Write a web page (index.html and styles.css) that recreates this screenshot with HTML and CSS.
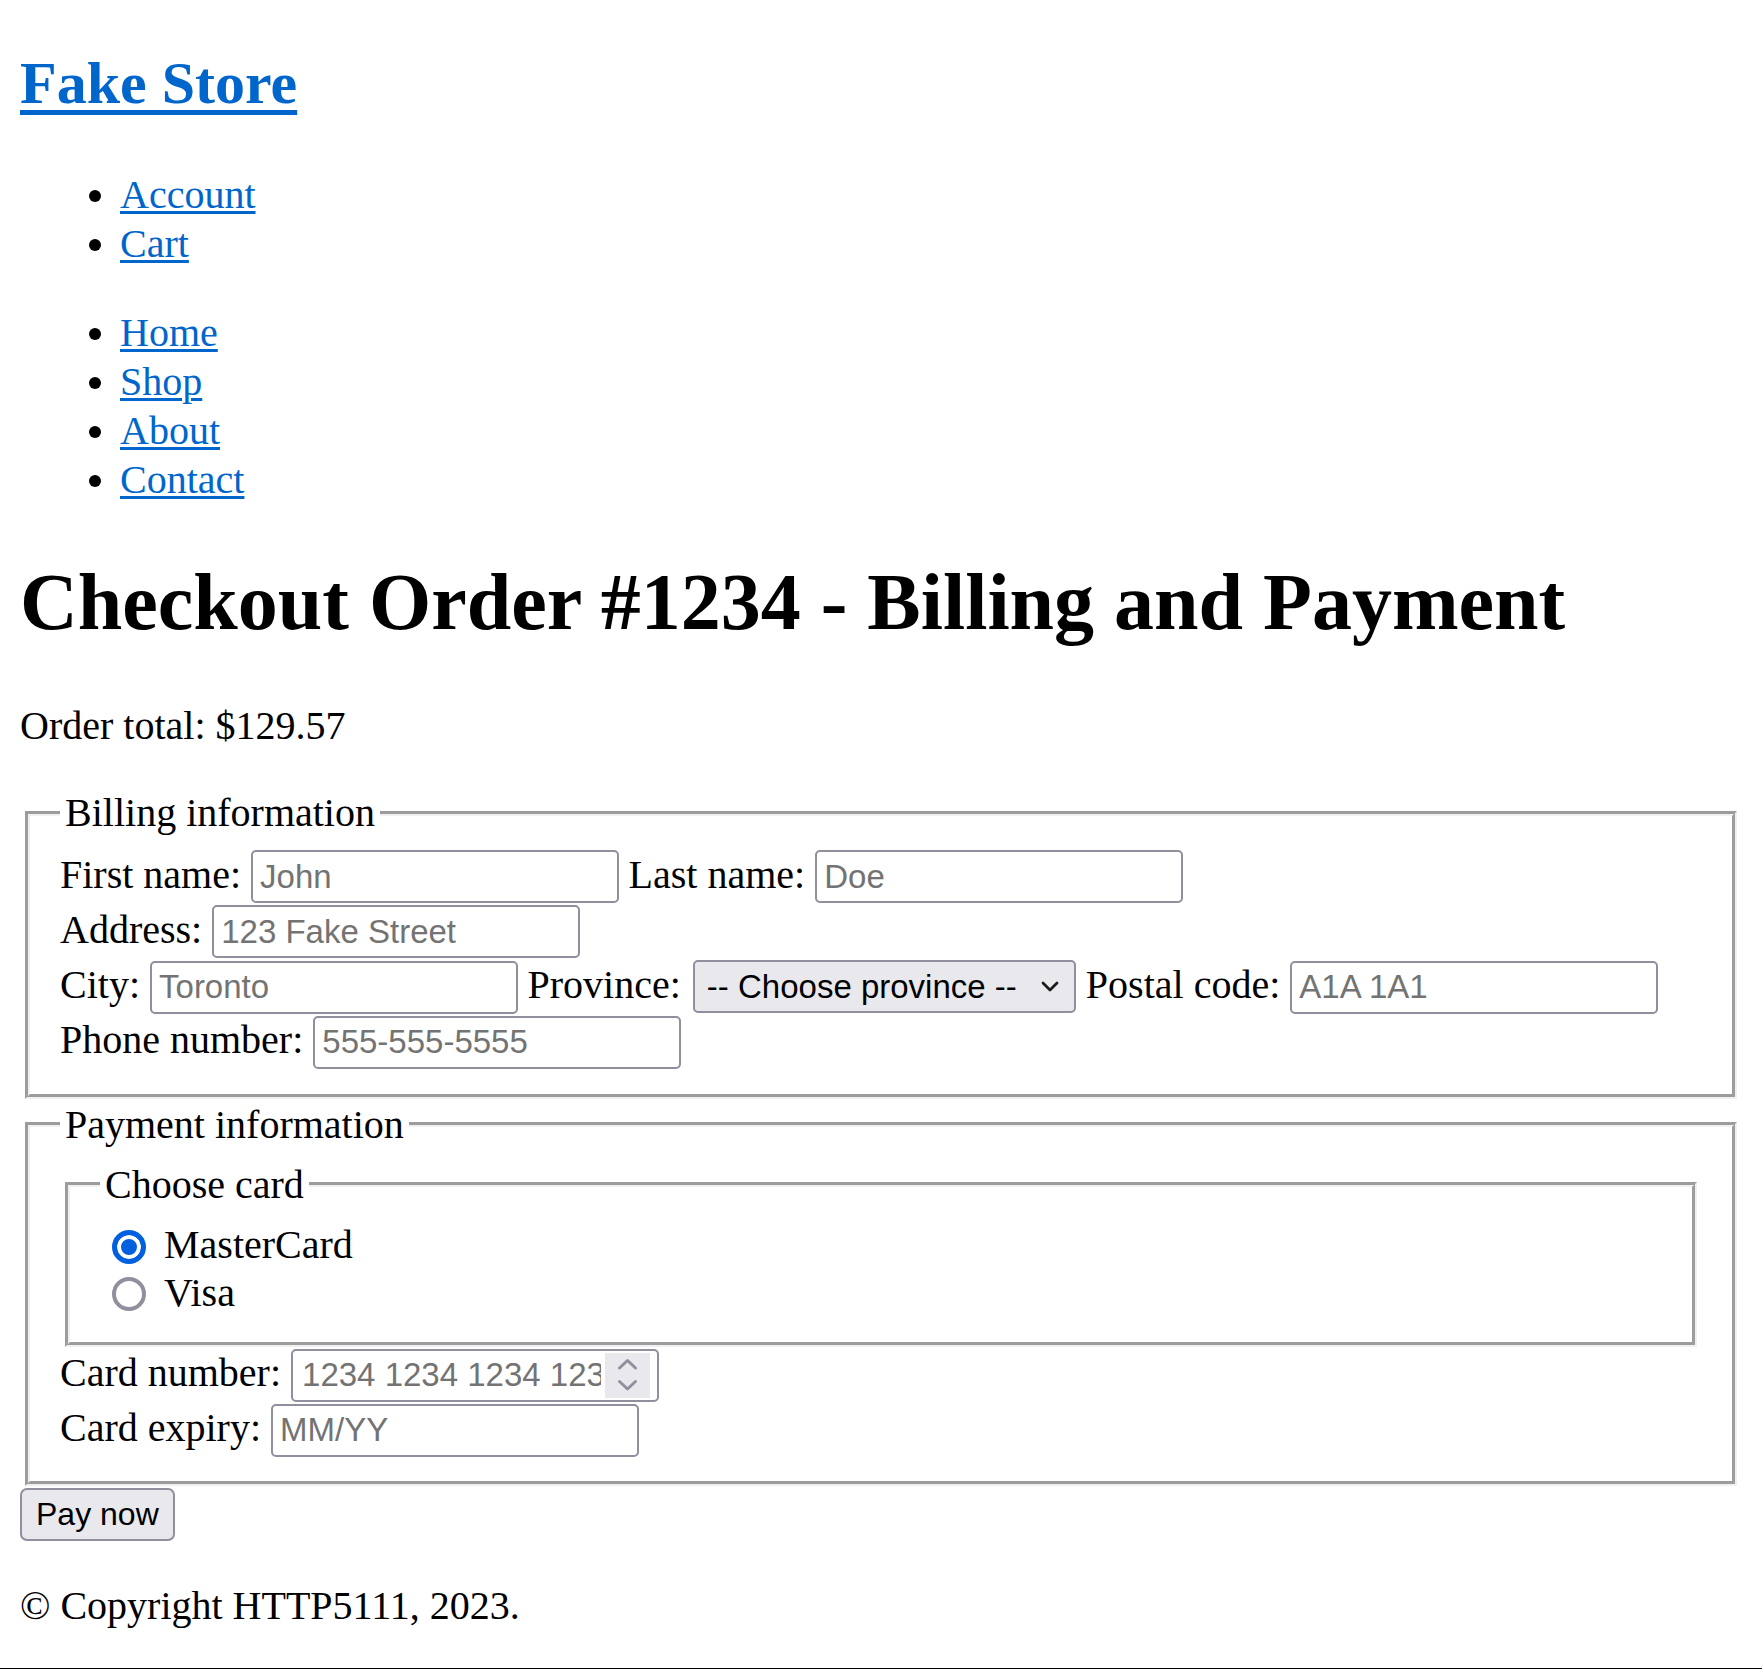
FILE: index.html
```html
<!DOCTYPE html>
<html lang="en">
<head>
<meta charset="utf-8">
<title>Checkout - Fake Store</title>
<link rel="stylesheet" href="styles.css">
</head>
<body>
<div class="page">
  <header class="site-header">
    <h2 class="logo"><a class="logo-link" href="#">Fake Store</a></h2>
    <ul class="nav-list">
      <li><a class="nav-link" href="#">Account</a></li>
      <li><a class="nav-link" href="#">Cart</a></li>
    </ul>
    <ul class="nav-list">
      <li><a class="nav-link" href="#">Home</a></li>
      <li><a class="nav-link" href="#">Shop</a></li>
      <li><a class="nav-link" href="#">About</a></li>
      <li><a class="nav-link" href="#">Contact</a></li>
    </ul>
  </header>
  <main class="content">
    <h1 class="page-title">Checkout Order #1234 - Billing and Payment</h1>
    <p class="total">Order total: $129.57</p>
    <form class="checkout">
      <fieldset class="group">
        <legend class="group-title">Billing information</legend>
        <div class="row">
          <label class="label" for="fname">First name:</label>
          <input class="field" id="fname" type="text" placeholder="John">
          <label class="label" for="lname">Last name:</label>
          <input class="field" id="lname" type="text" placeholder="Doe">
        </div>
        <div class="row">
          <label class="label" for="addr">Address:</label>
          <input class="field" id="addr" type="text" placeholder="123 Fake Street">
        </div>
        <div class="row">
          <label class="label" for="city">City:</label>
          <input class="field" id="city" type="text" placeholder="Toronto">
          <label class="label" for="prov">Province:</label>
          <span class="select-box">
            <select class="select" id="prov">
              <option>-- Choose province --</option>
            </select>
            <svg class="chevron" viewBox="0 0 20 11" aria-hidden="true"><polyline points="3,2 10,9 17,2" fill="none" stroke="#1b1b1b" stroke-width="2.8" stroke-linecap="round" stroke-linejoin="round"/></svg>
          </span>
          <label class="label" for="postal">Postal code:</label>
          <input class="field" id="postal" type="text" placeholder="A1A 1A1">
        </div>
        <div class="row">
          <label class="label" for="phone">Phone number:</label>
          <input class="field" id="phone" type="text" placeholder="555-555-5555">
        </div>
      </fieldset>
      <fieldset class="group payment">
        <legend class="group-title">Payment information</legend>
        <fieldset class="group cards">
          <legend class="group-title">Choose card</legend>
          <div class="choice">
            <input class="radio" type="radio" name="card" id="mc" checked>
            <label class="label" for="mc">MasterCard</label>
          </div>
          <div class="choice">
            <input class="radio" type="radio" name="card" id="visa">
            <label class="label" for="visa">Visa</label>
          </div>
        </fieldset>
        <div class="row">
          <label class="label" for="cardnum">Card number:</label>
          <span class="field number-box">
            <input class="number-input" id="cardnum" type="text" inputmode="numeric" placeholder="1234 1234 1234 1234">
            <span class="spin">
              <svg class="spin-icon" viewBox="0 0 45 45" aria-hidden="true">
                <polyline points="14.5,15 22.5,7.5 30.5,15" fill="none" stroke="#8f8f9d" stroke-width="3" stroke-linecap="round" stroke-linejoin="round"/>
                <polyline points="14.5,28.5 22.5,36 30.5,28.5" fill="none" stroke="#8f8f9d" stroke-width="3" stroke-linecap="round" stroke-linejoin="round"/>
              </svg>
            </span>
          </span>
        </div>
        <div class="row">
          <label class="label" for="expiry">Card expiry:</label>
          <input class="field" id="expiry" type="text" placeholder="MM/YY">
        </div>
      </fieldset>
      <button class="pay" type="submit">Pay now</button>
    </form>
  </main>
  <footer class="site-footer">
    <p class="copyright">© Copyright HTTP5111, 2023.</p>
  </footer>
</div>
<div class="page-edge"></div>
</body>
</html>
```

FILE: styles.css
```css
html {
  background: #ffffff;
}

body {
  margin: 0;
  font-family: "Liberation Serif", "Times New Roman", serif;
  font-size: 40px;
  line-height: 49px;
  color: #000000;
}

.page {
  padding: 0 20px;
}

.logo {
  font-size: 60px;
  font-weight: bold;
  line-height: 66px;
  margin: 50px 0 54px;
}

.logo-link {
  color: #0066cc;
  text-decoration: underline;
  text-decoration-thickness: 5px;
  text-underline-offset: 7px;
}

.nav-list {
  margin: 40px 0;
  padding-left: 100px;
  list-style: disc;
}

.nav-list li {
  line-height: 49px;
}

.nav-link {
  color: #0066cc;
  text-decoration: underline;
  text-decoration-thickness: 3px;
  text-underline-offset: 3px;
}

.page-title {
  font-size: 80px;
  font-weight: bold;
  line-height: 89px;
  margin: 54px 0;
}

.total {
  margin: 40px 0;
}

.checkout {
  margin: 0;
}

.group {
  margin: 0 5px;
  padding: 14px 30px 25px;
  border: 5px groove #f0f0f0;
  min-width: 0;
}

.group-title {
  padding: 0 5px;
  font-size: 40px;
  line-height: 46px;
}

.payment {
  margin-top: 3px;
  padding-bottom: 24px;
}

.cards {
  margin: 0 5px;
}

.row {
  display: flex;
  align-items: baseline;
  column-gap: 10px;
}

.row + .row,
.cards + .row {
  margin-top: 2px;
}

.label {
  line-height: 46px;
}

.field {
  box-sizing: border-box;
  width: 367.5px;
  height: 53px;
  margin: 0;
  padding: 0 7px;
  border: 2px solid #8f8f9d;
  border-radius: 5px;
  background: #ffffff;
  font-family: "Liberation Sans", Arial, sans-serif;
  font-size: 33px;
  color: #000000;
  outline: none;
}

.field::placeholder,
.number-input::placeholder {
  color: #737373;
  opacity: 1;
}

.select-box {
  display: inline-flex;
  align-items: center;
  box-sizing: border-box;
  width: 383px;
  height: 53px;
  margin-left: 2px;
  border: 2px solid #8f8f9d;
  border-radius: 5px;
  background: #e9e9ed;
}

.select {
  appearance: none;
  -webkit-appearance: none;
  flex: 1;
  min-width: 0;
  height: 100%;
  margin: 0;
  padding: 0 0 0 12px;
  border: 0;
  background: transparent;
  font-family: "Liberation Sans", Arial, sans-serif;
  font-size: 33px;
  color: #000000;
  outline: none;
}

.chevron {
  flex: none;
  width: 20px;
  height: 11px;
  margin: 0 14px 0 6px;
}

.number-box {
  display: inline-flex;
  align-items: center;
  padding: 0;
}

.number-input {
  flex: 1;
  min-width: 0;
  height: 100%;
  margin: 0;
  padding: 0 4px 0 9px;
  border: 0;
  background: transparent;
  font-family: "Liberation Sans", Arial, sans-serif;
  font-size: 33px;
  color: #000000;
  outline: none;
}

.spin {
  flex: none;
  display: flex;
  width: 45px;
  height: 45px;
  margin-right: 6.5px;
  background: #e9e9ed;
}

.spin-icon {
  width: 45px;
  height: 45px;
}

.choice {
  display: flex;
  align-items: center;
  height: 47.5px;
}

.radio {
  appearance: none;
  -webkit-appearance: none;
  box-sizing: border-box;
  flex: none;
  width: 34px;
  height: 34px;
  margin: 3px 18px 0 12px;
  border: 4px solid #8f8f9d;
  border-radius: 50%;
  background: #ffffff;
}

.radio:checked {
  border: 5px solid #0060df;
  background: #0060df;
  box-shadow: inset 0 0 0 4px #ffffff;
}

.pay {
  display: block;
  box-sizing: border-box;
  height: 53px;
  margin: 2px 0 0;
  padding: 0 14px;
  border: 2px solid #8f8f9d;
  border-radius: 7px;
  background: #e9e9ed;
  font-family: "Liberation Sans", Arial, sans-serif;
  font-size: 32px;
  color: #000000;
}

.copyright {
  margin: 40px 0 38px;
}

.page-edge {
  height: 1px;
  background: #000000;
}
```
